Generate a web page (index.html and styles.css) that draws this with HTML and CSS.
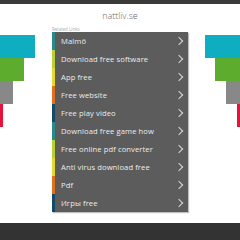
FILE: index.html
```html
<!DOCTYPE html>
<html>
<head>
<meta charset="utf-8">
<link rel="stylesheet" href="styles.css">
</head>
<body>
<div class="topbar"></div>
<div class="page">
  <div class="deco deco-left">
    <div class="bar cyan w35"></div>
    <div class="bar green w24"></div>
    <div class="bar grey w13"></div>
    <div class="bar red w3"></div>
  </div>
  <main class="center">
    <h1 class="title">nattliv.se</h1>
    <div class="related">Related Links</div>
    <ul class="links">
      <li class="c1"><span>Malmö</span><i class="chev"></i></li>
      <li class="c2"><span>Download free software</span><i class="chev"></i></li>
      <li class="c3"><span>App free</span><i class="chev"></i></li>
      <li class="c4"><span>Free website</span><i class="chev"></i></li>
      <li class="c5"><span>Free play video</span><i class="chev"></i></li>
      <li class="c1"><span>Download free game how</span><i class="chev"></i></li>
      <li class="c2"><span>Free online pdf converter</span><i class="chev"></i></li>
      <li class="c3"><span>Anti virus download free</span><i class="chev"></i></li>
      <li class="c4"><span>Pdf</span><i class="chev"></i></li>
      <li class="c5"><span>Игры free</span><i class="chev"></i></li>
    </ul>
  </main>
  <div class="deco deco-right">
    <div class="bar cyan w35"></div>
    <div class="bar green w25"></div>
    <div class="bar grey w14"></div>
    <div class="bar red w3"></div>
  </div>
</div>
<footer class="footer"></footer>
</body>
</html>
```
FILE: styles.css
```css
html, body { margin: 0; padding: 0; }
body {
  width: 240px;
  height: 240px;
  overflow: hidden;
  background: #fff;
  font-family: "Open Sans", "Noto Sans", sans-serif;
  display: flex;
  flex-direction: column;
}
.topbar { height: 4px; background: #3a3a3a; flex: none; }
.page {
  display: flex;
  justify-content: space-between;
  height: 219px;
  flex: none;
}
.deco {
  width: 52px;
  padding-top: 31px;
  display: flex;
  flex-direction: column;
}
.deco-right { align-items: flex-end; }
.bar { height: 23px; flex: none; }
.cyan { background: #0fadc0; }
.green { background: #5dac2e; }
.grey { background: #888888; }
.red { background: #e4133a; }
.w35 { width: 35px; }
.w24 { width: 24px; }
.w25 { width: 25px; }
.w13 { width: 13px; }
.w14 { width: 14px; }
.w3 { width: 3px; }
.center { width: 136px; display: flex; flex-direction: column; }
.title {
  margin: 0;
  padding-top: 6px;
  height: 13px;
  font-size: 9px;
  font-weight: 300;
  color: #666;
  text-align: center;
  line-height: 11px;
}
.related {
  font-size: 4.5px;
  color: #aaa;
  height: 9px;
  line-height: 6px;
  padding-top: 3px;
  box-sizing: border-box;
}
.links {
  list-style: none;
  margin: 0;
  padding: 0;
  background: #5c5c5c;
  box-shadow: 1px 1px 1px rgba(0,0,0,0.25);
}
.links li {
  height: 18px;
  display: flex;
  align-items: center;
  justify-content: space-between;
  border-left: 3px solid #2a8a88;
  padding-left: 6px;
  padding-right: 5px;
  color: #ececec;
  font-size: 7.6px;
  letter-spacing: 0.1px;
}
.links li.c1 { border-left-color: #2a8a88; }
.links li.c2 { border-left-color: #b8d034; }
.links li.c3 { border-left-color: #e4d830; }
.links li.c4 { border-left-color: #e0701e; }
.links li.c5 { border-left-color: #17486a; }
.chev {
  width: 5px;
  height: 5px;
  border-top: 1px solid #d8d8d8;
  border-right: 1px solid #d8d8d8;
  transform: rotate(45deg);
  margin-right: 1px;
}
.footer { flex: 1; background: #333; }
```
